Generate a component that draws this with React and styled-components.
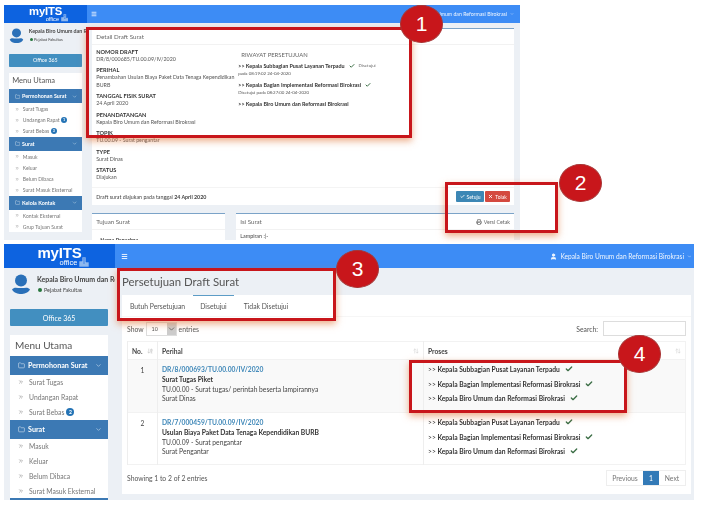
import React from 'react'
import styled, { createGlobalStyle } from 'styled-components'
import { Folder, ChevronDown, ChevronsRight, Check, Menu, Printer, X, User, ArrowUpDown, ArrowDownAZ } from 'lucide-react'

const Global = createGlobalStyle`
  html, body { margin: 0; padding: 0; background: #fff; }
  body { font-family: Lato, "Noto Sans", sans-serif; color: #444; }
  * { box-sizing: border-box; }
`

const Page = styled.div`
  position: relative;
  width: 703px;
  height: 505px;
  overflow: hidden;
  padding: 5px 0 0 4px;
  display: flex;
  flex-direction: column;
  gap: 4px;
`
const Shot = styled.div`
  display: flex;
  width: ${p => p.$w}px;
  height: ${p => p.$h}px;
  overflow: hidden;
  background: #ecf0f5;
  filter: blur(0.35px);
`

/* sidebar, drawn at the size of the lower shot and zoomed down for the upper one */
const Side = styled.aside`
  zoom: ${p => p.$zoom};
  width: 111px;
  flex: none;
  overflow: hidden;
  background: #ecf0f5;
`
const LogoBar = styled.div`
  height: 24px;
  padding-top: 2px;
  background: #0d63e0;
  color: #fff;
  display: flex;
  flex-direction: column;
  align-items: center;
  font-family: "Liberation Sans", sans-serif;
`
const LogoText = styled.div`
  font-size: 15px;
  font-weight: 700;
  line-height: 13px;
  letter-spacing: -.2px;
`
const LogoMark = styled.span`
  text-decoration: overline;
  text-decoration-thickness: 1px;
`
const LogoSub = styled.div`
  font-size: 7.5px;
  line-height: 8px;
  margin-left: 30px;
  display: flex;
  align-items: center;
  gap: 2px;
  svg { margin-top: -3px; }
`
const UserBox = styled.div`
  height: 41px;
  display: flex;
  gap: 6px;
  padding: 6px 0 0 7px;
  overflow: hidden;
`
const UserLines = styled.div`
  white-space: nowrap;
`
const UserName = styled.div`
  font-size: 7px;
  font-weight: 700;
  line-height: 10px;
  color: #444;
`
const UserRole = styled.div`
  font-size: 5.4px;
  line-height: 12px;
  color: #444;
  display: flex;
  align-items: center;
  gap: 2px;
  padding-left: 1px;
`
const Dot = styled.i`
  width: 4px;
  height: 4px;
  border-radius: 50%;
  background: #27763d;
`
const Office = styled.div`
  margin: 0 7px 9px 6px;
  height: 17px;
  border-radius: 1px;
  background: #428fc0;
  color: #fff;
  font-size: 7px;
  display: flex;
  align-items: center;
  justify-content: center;
`
const MenuCard = styled.nav`
  margin: 0 7px 0 6px;
  background: #fff;
`
const MenuTitle = styled.div`
  height: 21px;
  padding: 4px 5px 0;
  font-size: 10px;
  line-height: 13px;
  color: #555;
`
const MenuHead = styled.div`
  height: 19px;
  background: #3c79b4;
  color: #fff;
  font-size: 7.2px;
  font-weight: 700;
  display: flex;
  align-items: center;
  gap: 3px;
  padding: 0 6px 0 8px;
  span { flex: 1; }
`
const MenuItem = styled.div`
  height: 14.9px;
  display: flex;
  align-items: center;
  gap: 5px;
  padding-left: 8px;
  font-size: 6.8px;
  color: #777;
  white-space: nowrap;
`
const Badge = styled.b`
  width: 8px;
  height: 8px;
  margin-left: -3px;
  border-radius: 50%;
  background: #2473b5;
  color: #fff;
  font-size: 5px;
  line-height: 8px;
  text-align: center;
`

const Col = styled.div`
  flex: 1;
  min-width: 0;
  display: flex;
  flex-direction: column;
`
const Nav = styled.header`
  height: ${p => p.$h}px;
  flex: none;
  background: #3d8cf5;
  color: #fff;
  display: flex;
  align-items: center;
  justify-content: space-between;
  padding: 0 ${p => p.$pad}px 0 ${p => p.$pad2}px;
  font-size: ${p => p.$fs}px;
`
const NavUser = styled.div`
  display: flex;
  align-items: center;
  gap: 3px;
  opacity: .92;
`

/* upper shot */
const UpperBody = styled.div`
  padding: 5px 6px 0 5px;
  display: flex;
  flex-direction: column;
  gap: 8px;
`
const Card = styled.section`
  background: #fff;
  border-top: 1px solid #7ba3c8;
  flex: ${p => p.$grow || 'none'};
  min-width: 0;
`
const CardHead = styled.div`
  height: 16px;
  padding: 0 4px;
  display: flex;
  align-items: center;
  justify-content: space-between;
  font-size: 6.2px;
  color: #666;
  border-bottom: 1px solid #f2f2f2;
`
const DraftGrid = styled.div`
  display: grid;
  grid-template-columns: 142px 1fr;
  height: 142px;
  padding: 3px 4px 0;
`
const Field = styled.div`
  margin-bottom: 2.8px;
  width: 140px;
`
const FieldLabel = styled.div`
  font-size: 5.6px;
  font-weight: 700;
  line-height: 8px;
  color: #333;
`
const FieldValue = styled.div`
  font-size: 5.3px;
  line-height: 7.6px;
  color: #555;
`
const History = styled.div`
  padding-top: 2px;
`
const HistoryTitle = styled.div`
  font-size: 5.9px;
  line-height: 10px;
  color: #666;
  padding-left: 3px;
  margin-bottom: 2px;
`
const HistoryStep = styled.div`
  font-size: 5.4px;
  font-weight: 700;
  line-height: 8px;
  color: #333;
  white-space: nowrap;
  display: flex;
  align-items: center;
  gap: 4px;
`
const HistoryNote = styled.div`
  font-size: 4.4px;
  line-height: 7px;
  margin-bottom: 4px;
  color: #555;
`
const Small = styled.span`
  font-size: 4.4px;
  font-weight: 400;
  color: #666;
`
const CardFoot = styled.div`
  height: 18px;
  border-top: 1px solid #f4f4f4;
  padding: 0 4px;
  display: flex;
  align-items: center;
  justify-content: space-between;
  font-size: 5.3px;
  color: #444;
`
const Buttons = styled.div`
  display: flex;
  gap: 1px;
`
const Btn = styled.div`
  height: 11px;
  width: ${p => p.$w}px;
  background: ${p => p.$bg};
  color: #fff;
  font-size: 5px;
  display: flex;
  align-items: center;
  justify-content: center;
  gap: 2px;
  border-radius: 1px;
`
const CardRow = styled.div`
  display: flex;
  gap: 11px;
`
const Clip = styled.div`
  padding: ${p => p.$top}px 0 0 ${p => p.$left}px;
  font-size: 5.4px;
  line-height: 8px;
  color: #444;
`
const PrintLink = styled.div`
  display: flex;
  align-items: center;
  gap: 2px;
  font-size: 5.3px;
`

/* lower shot */
const LowerBody = styled.div`
  padding: 0 3px 0 7px;
  flex: 1;
`
const PageTitle = styled.h1`
  margin: 0;
  height: 27px;
  font-size: 11.400px;
  font-weight: 400;
  line-height: 28px;
  color: #555;
`
const Panel = styled.section`
  background: #fff;
  height: 199px;
`
const Tabs = styled.div`
  height: 22px;
  display: flex;
  font-size: 6.8px;
  color: #555;
  border-bottom: 1px solid #f6f6f6;
`
const Tab = styled.div`
  width: ${p => p.$w}px;
  display: flex;
  align-items: center;
  justify-content: center;
  border-top: 1px solid ${p => (p.$on ? '#5c9cc6' : 'transparent')};
`
const PanelInner = styled.div`
  padding: 4px 5px 0;
`
const ToolRow = styled.div`
  height: 15px;
  display: flex;
  align-items: center;
  justify-content: space-between;
  font-size: 6.8px;
  color: #555;
`
const Inline = styled.div`
  display: flex;
  align-items: center;
  gap: 2px;
`
const Select = styled.div`
  width: 31px;
  height: 14px;
  border: 1px solid #ddd;
  display: flex;
  align-items: center;
  justify-content: space-between;
  padding-left: 5px;
  font-size: 5.4px;
  svg { background: #ccc; height: 100%; width: 9px; }
`
const SearchInput = styled.div`
  width: 83px;
  height: 15px;
  border: 1px solid #ddd;
  margin-left: 3px;
`
const Table = styled.table`
  width: 559px;
  margin-top: 5px;
  border-collapse: collapse;
  table-layout: fixed;
  font-size: 6.7px;
  color: #444;
  border: 1px solid #f2f2f2;
  th, td {
    border-left: 1px solid #eee;
    padding: 0;
    vertical-align: top;
  }
  th {
    height: 18px;
    vertical-align: middle;
    text-align: left;
    font-weight: 700;
    color: #444;
    padding: 0 4px;
  }
`
const HeadInner = styled.div`
  display: flex;
  align-items: center;
  justify-content: space-between;
`
const Row = styled.tr`
  height: ${p => p.$h}px;
  background: ${p => (p.$odd ? '#f9f9f9' : '#fff')};
  border-top: 1px solid #f2f2f2;
`
const NoCell = styled.td`
  text-align: center;
  padding-top: 5px !important;
  line-height: 10px;
`
const SubjectCell = styled.td`
  padding: 5px 4px 0 !important;
  line-height: 9.8px;
`
const Code = styled.div`
  color: #3e87b8;
  font-weight: 700;
`
const Strong = styled.div`
  color: #333;
  font-weight: 700;
`
const ProcCell = styled.td`
  padding: 5px 4px 0 !important;
`
const ProcStep = styled.div`
  height: 14.5px;
  line-height: 9px;
  display: flex;
  align-items: flex-start;
  gap: 5px;
  font-weight: 700;
  color: #333;
  white-space: nowrap;
  em { font-style: normal; font-weight: 400; }
`
const Foot = styled.div`
  display: flex;
  align-items: center;
  justify-content: space-between;
  margin-top: 5px;
  font-size: 6.8px;
  color: #555;
`
const Pager = styled.div`
  display: flex;
  height: 16px;
  border: 1px solid #eee;
`
const PageBtn = styled.div`
  width: ${p => p.$w}px;
  background: ${p => (p.$on ? '#337ab7' : '#fff')};
  color: ${p => (p.$on ? '#fff' : '#777')};
  display: flex;
  align-items: center;
  justify-content: center;
`

/* annotations laid over the screenshots */
const Mark = styled.div`
  position: absolute;
  left: ${p => p.$x}px;
  top: ${p => p.$y}px;
  width: ${p => p.$w}px;
  height: ${p => p.$h}px;
  border: 3px solid #c8161b;
  box-shadow: 0 3px 7px rgba(225, 120, 60, .6);
`
const Num = styled.div`
  position: absolute;
  left: ${p => p.$x}px;
  top: ${p => p.$y}px;
  width: 43px;
  height: 38px;
  background: #c8161b;
  border: 1px solid #a73535;
  border-radius: 50%;
  color: #fff;
  font-family: "Liberation Sans", sans-serif;
  font-size: 21px;
  line-height: 36px;
  text-align: center;
`
const PersonSvg = styled.svg`
  flex: none;
`

const Check2 = ({ size = 7 }) => <Check size={size} strokeWidth={4} color="#3c6e46" />

const Person = ({ size }) => (
  <PersonSvg width={size} height={size} viewBox="0 0 20 20">
    <circle cx="10" cy="6.5" r="6" fill="#2a70b8" />
    <path d="M1 15.500C3 12.500 6 14 10 14s7-1.500 9 1.500C17 19 13 20 10 20s-7-1-9-4.500z" fill="#2a70b8" />
  </PersonSvg>
)

function Sidebar({ zoom, name, sections }) {
  return (
    <Side $zoom={zoom}>
      <LogoBar>
        <LogoText>my<LogoMark>ITS</LogoMark></LogoText>
        <LogoSub>
          office
          <svg width="10" height="10" viewBox="0 0 10 10">
            <path d="M0 10V4h3V0h4v5h3v5zM4 2h2M4 4h2M4 6h2" fill="#8fb8ee" stroke="#0d63e0" strokeWidth=".6" />
          </svg>
        </LogoSub>
      </LogoBar>
      <UserBox>
        <Person size={20} />
        <UserLines>
          <UserName>{name}</UserName>
          <UserRole><Dot />Pejabat Fakultas</UserRole>
        </UserLines>
      </UserBox>
      <Office>Office 365</Office>
      <MenuCard>
        <MenuTitle>Menu Utama</MenuTitle>
        {sections.map(s => (
          <div key={s.title}>
            <MenuHead>
              <Folder size={7} strokeWidth={1.6} />
              <span>{s.title}</span>
              <ChevronDown size={7} strokeWidth={2} color="#cfe0f0" />
            </MenuHead>
            {s.items.map(i => (
              <MenuItem key={i.label}>
                <ChevronsRight size={6} strokeWidth={2} />
                {i.label}
                {i.badge && <Badge>{i.badge}</Badge>}
              </MenuItem>
            ))}
          </div>
        ))}
      </MenuCard>
    </Side>
  )
}

const upperMenu = [
  { title: 'Permohonan Surat', items: [{ label: 'Surat Tugas' }, { label: 'Undangan Rapat', badge: 1 }, { label: 'Surat Bebas', badge: 3 }] },
  { title: 'Surat', items: [{ label: 'Masuk' }, { label: 'Keluar' }, { label: 'Belum Dibaca' }, { label: 'Surat Masuk Eksternal' }] },
  { title: 'Kelola Kontak', items: [{ label: 'Kontak Eksternal' }, { label: 'Grup Tujuan Surat' }] },
]
const lowerMenu = [
  { title: 'Permohonan Surat', items: [{ label: 'Surat Tugas' }, { label: 'Undangan Rapat' }, { label: 'Surat Bebas', badge: 2 }] },
  { title: 'Surat', items: [{ label: 'Masuk' }, { label: 'Keluar' }, { label: 'Belum Dibaca' }, { label: 'Surat Masuk Eksternal' }] },
  { title: 'Kelola Kontak', items: [] },
]
const fields = [
  ['NOMOR DRAFT', 'DR/8/000685/TU.00.09/IV/2020'],
  ['PERIHAL', 'Penambahan Usulan Biaya Paket Data Tenaga Kependidikan BURB'],
  ['TANGGAL FISIK SURAT', '24 April 2020'],
  ['PENANDATANGAN', 'Kepala Biro Umum dan Reformasi Birokrasi'],
  ['TOPIK', 'TU.00.09 - Surat pengantar'],
  ['TYPE', 'Surat Dinas'],
  ['STATUS', 'Diajukan'],
]
const steps = [
  'Kepala Subbagian Pusat Layanan Terpadu',
  'Kepala Bagian Implementasi Reformasi Birokrasi',
  'Kepala Biro Umum dan Reformasi Birokrasi',
]
const rows = [
  { no: 1, code: 'DR/8/000693/TU.00.00/IV/2020', title: 'Surat Tugas Piket', topic: 'TU.00.00 - Surat tugas/ perintah beserta lampirannya', type: 'Surat Dinas' },
  { no: 2, code: 'DR/7/000459/TU.00.09/IV/2020', title: 'Usulan Biaya Paket Data Tenaga Kependidikan BURB', topic: 'TU.00.09 - Surat pengantar', type: 'Surat Pengantar' },
]

export default function App() {
  return (
    <Page>
      <Global />
      <Shot $w={516} $h={235}>
        <Sidebar zoom={0.75} name="Kepala Biro Umum dan Reformasi" sections={upperMenu} />
        <Col>
          <Nav $h={18} $pad={6} $pad2={4} $fs={5.2}>
            <Menu size={6} strokeWidth={3} />
            <NavUser>Kepala Biro Umum dan Reformasi Birokrasi <ChevronDown size={4} /></NavUser>
          </Nav>
          <UpperBody>
            <Card>
              <CardHead>Detail Draft Surat</CardHead>
              <DraftGrid>
                <div>
                  {fields.map(([k, v]) => (
                    <Field key={k}>
                      <FieldLabel>{k}</FieldLabel>
                      <FieldValue>{v}</FieldValue>
                    </Field>
                  ))}
                </div>
                <History>
                  <HistoryTitle>RIWAYAT PERSETUJUAN</HistoryTitle>
                  <HistoryStep>&gt;&gt; {steps[0]} <Check2 size={6} /> <Small>Disetujui</Small></HistoryStep>
                  <HistoryNote>pada 08:19:02 24-04-2020</HistoryNote>
                  <HistoryStep>&gt;&gt; {steps[1]} <Check2 size={6} /></HistoryStep>
                  <HistoryNote>Disetujui pada 08:27:00 24-04-2020</HistoryNote>
                  <HistoryStep>&gt;&gt; {steps[2]}</HistoryStep>
                </History>
              </DraftGrid>
              <CardFoot>
                <span>Draft surat diajukan pada tanggal <b>24 April 2020</b></span>
                <Buttons>
                  <Btn $w={28} $bg="#3c87b5"><Check size={5} strokeWidth={4} />Setuju</Btn>
                  <Btn $w={25} $bg="#d4493f"><X size={5} strokeWidth={4} />Tolak</Btn>
                </Buttons>
              </CardFoot>
            </Card>
            <CardRow>
              <Card $grow="0 0 133px">
                <CardHead>Tujuan Surat</CardHead>
                <Clip $top={6} $left={8}><b>Nama Penerima</b></Clip>
              </Card>
              <Card $grow="1">
                <CardHead>
                  Isi Surat
                  <PrintLink><Printer size={6} strokeWidth={2.5} /> Versi Cetak</PrintLink>
                </CardHead>
                <Clip $top={2} $left={4}>Lampiran :|-</Clip>
              </Card>
            </CardRow>
          </UpperBody>
        </Col>
      </Shot>

      <Shot $w={690} $h={256}>
        <Sidebar zoom={1} name="Kepala Biro Umum dan Reformasi" sections={lowerMenu} />
        <Col>
          <Nav $h={24} $pad={2} $pad2={6} $fs={6.6}>
            <Menu size={7} strokeWidth={3} />
            <NavUser><User size={7} strokeWidth={3} fill="#fff" /> Kepala Biro Umum dan Reformasi Birokrasi <ChevronDown size={5} /></NavUser>
          </Nav>
          <LowerBody>
            <PageTitle>Persetujuan Draft Surat</PageTitle>
            <Panel>
              <Tabs>
                <Tab $w={71}>Butuh Persetujuan</Tab>
                <Tab $w={41} $on>Disetujui</Tab>
                <Tab $w={64}>Tidak Disetujui</Tab>
              </Tabs>
              <PanelInner>
                <ToolRow>
                  <Inline>
                    Show
                    <Select>10<ChevronDown size={6} /></Select>
                    entries
                  </Inline>
                  <Inline>Search:<SearchInput /></Inline>
                </ToolRow>
                <Table>
                  <colgroup>
                    <col style={{ width: 30 }} />
                    <col style={{ width: 266 }} />
                    <col />
                  </colgroup>
                  <thead>
                    <tr>
                      <th><HeadInner>No. <ArrowDownAZ size={6} color="#bbb" /></HeadInner></th>
                      <th><HeadInner>Perihal <ArrowUpDown size={6} color="#ccc" /></HeadInner></th>
                      <th><HeadInner>Proses <ArrowUpDown size={6} color="#ccc" /></HeadInner></th>
                    </tr>
                  </thead>
                  <tbody>
                    {rows.map((r, i) => (
                      <Row key={r.no} $odd={i === 0} $h={i === 0 ? 53 : 52}>
                        <NoCell>{r.no}</NoCell>
                        <SubjectCell>
                          <Code>{r.code}</Code>
                          <Strong>{r.title}</Strong>
                          <div>{r.topic}</div>
                          <div>{r.type}</div>
                        </SubjectCell>
                        <ProcCell>
                          {steps.map(s => (
                            <ProcStep key={s}><span><em>&gt;&gt;</em> {s}</span><Check2 size={8} /></ProcStep>
                          ))}
                        </ProcCell>
                      </Row>
                    ))}
                  </tbody>
                </Table>
                <Foot>
                  Showing 1 to 2 of 2 entries
                  <Pager>
                    <PageBtn $w={36}>Previous</PageBtn>
                    <PageBtn $w={16} $on>1</PageBtn>
                    <PageBtn $w={26}>Next</PageBtn>
                  </Pager>
                </Foot>
              </PanelInner>
            </Panel>
          </LowerBody>
        </Col>
      </Shot>

      <Mark $x={86} $y={27} $w={326} $h={111} />
      <Mark $x={445} $y={182} $w={113} $h={51} />
      <Mark $x={117} $y={268} $w={219} $h={53} />
      <Mark $x={409} $y={360} $w={218} $h={53} />
      <Num $x={400} $y={5}>1</Num>
      <Num $x={559} $y={164}>2</Num>
      <Num $x={336} $y={250}>3</Num>
      <Num $x={618} $y={335}>4</Num>
    </Page>
  )
}
